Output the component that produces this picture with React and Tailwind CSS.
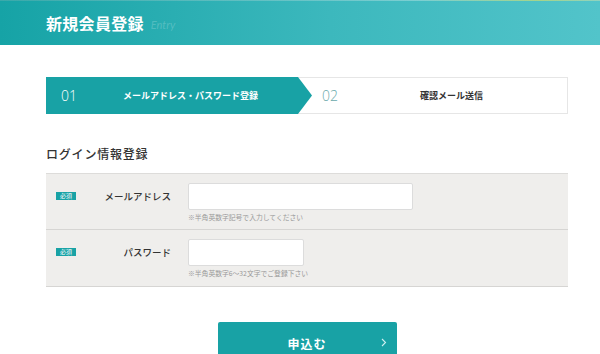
export default function App() {
  const jp = { fontFamily: '"Noto Sans CJK JP", "Noto Sans", sans-serif' };
  return (
    <div className="w-[600px] h-[354px] overflow-hidden bg-white" style={jp}>
      <header className="relative h-[45px] bg-[linear-gradient(90deg,#16a3a6_0%,#3cb8bd_55%,#52c4ca_100%)] flex items-center pl-[46px]">
        <div className="absolute top-0 left-0 right-0 h-[1px] bg-[linear-gradient(90deg,#3aa9aa_0%,#7ccfd2_70%,#a5d48a_90%,#8fd3c0_100%)]"></div>
        <h1 className="text-white font-bold text-[16px] leading-none tracking-[0.3px]">新規会員登録</h1>
        <span className="ml-[7px] mt-[3px] text-[11px] italic text-[#ffffff]/20 leading-none" style={{ fontFamily: '"Lato", sans-serif' }}>Entry</span>
      </header>

      <div className="ml-[46px] w-[522px]">
        <div className="mt-[32px] h-[37px] flex border border-[#e6e6e6] relative">
          <div className="-my-[1px] -ml-[1px] w-[266px] h-[37px] bg-[#18a2a5] flex items-center [clip-path:polygon(0_0,calc(100%-14px)_0,100%_50%,calc(100%-14px)_100%,0_100%)]">
            <span className="ml-[15px] text-white text-[14px] font-light leading-none" style={{ fontFamily: '"Open Sans", sans-serif' }}>01</span>
            <span className="ml-[46px] text-white text-[9px] font-bold leading-none">メールアドレス・パスワード登録</span>
          </div>
          <div className="flex items-center">
            <span className="ml-[10px] text-[#6aa9ac] text-[14px] font-light leading-none" style={{ fontFamily: '"Open Sans", sans-serif' }}>02</span>
            <span className="ml-[82px] text-[#333] text-[9px] font-bold leading-none">確認メール送信</span>
          </div>
        </div>

        <h2 className="mt-[34px] text-[12px] font-medium text-[#333] tracking-[0.8px] leading-none">ログイン情報登録</h2>

        <div className="mt-[13px] bg-[#efeeec] border-t border-[#dddcda]">
          <div className="h-[56px] flex border-b border-[#d6d5d3]">
            <div className="w-[142px] flex items-start pt-[18px] pl-[10px]">
              <span className="bg-[#18a2a5] text-white text-[6px] leading-none px-[4px] py-[1px]">必須</span>
              <span className="ml-auto mr-[17px] text-[9.5px] font-medium text-[#333] leading-none">メールアドレス</span>
            </div>
            <div className="pt-[9px]">
              <div className="w-[225px] h-[27px] bg-white border border-[#dcdcdc] rounded-[2px]"></div>
              <div className="mt-[4px] text-[6.8px] text-[#999] leading-none">※半角英数字記号で入力してください</div>
            </div>
          </div>
          <div className="h-[57px] flex border-b border-[#d6d5d3]">
            <div className="w-[142px] flex items-start pt-[18px] pl-[10px]">
              <span className="bg-[#18a2a5] text-white text-[6px] leading-none px-[4px] py-[1px]">必須</span>
              <span className="ml-auto mr-[17px] text-[9.5px] font-medium text-[#333] leading-none">パスワード</span>
            </div>
            <div className="pt-[9px]">
              <div className="w-[116px] h-[27px] bg-white border border-[#dcdcdc] rounded-[2px]"></div>
              <div className="mt-[4px] text-[6.8px] text-[#999] leading-none">※半角英数字6～32文字でご登録下さい</div>
            </div>
          </div>
        </div>
      </div>

      <div className="flex justify-center mt-[35px]">
        <button className="ml-[14px] w-[179px] h-[44px] bg-[#18a2a5] rounded-t-[2px] relative flex items-center justify-center text-white text-[12px] font-bold tracking-[1px]">
          申込む
          <svg className="absolute right-[10px] top-[16px]" width="6" height="9" viewBox="0 0 6 9" fill="none">
            <path d="M1 1l3.5 3.5L1 8" stroke="#cfeff0" strokeWidth="1.1" />
          </svg>
        </button>
      </div>
    </div>
  );
}
